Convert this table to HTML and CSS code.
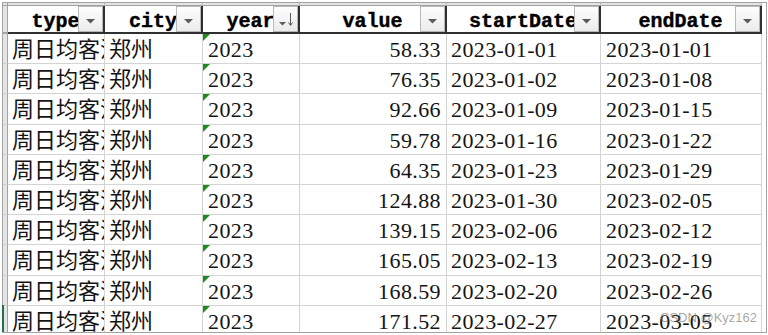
FILE: index.html
```html
<!DOCTYPE html>
<html lang="zh">
<head>
<meta charset="utf-8">
<title>sheet</title>
<link rel="stylesheet" href="styles.css">
</head>
<body>
<div class="sheet">
  <div class="grid">
    <div class="strip corner"></div><div class="strip"></div><div class="strip"></div><div class="strip"></div><div class="strip"></div><div class="strip"></div><div class="strip"></div>

    <div class="rh rh-head"></div>
    <div class="hd">type<span class="btn"><svg width="23" height="24" viewBox="0 0 23 24"><polygon points="7,12 16,12 11.5,16.5" fill="#5a5a5a"/></svg></span></div>
    <div class="hd">city<span class="btn"><svg width="23" height="24" viewBox="0 0 23 24"><polygon points="7,12 16,12 11.5,16.5" fill="#5a5a5a"/></svg></span></div>
    <div class="hd">year<span class="btn"><svg width="23" height="24" viewBox="0 0 23 24"><polygon points="5,15 12,15 8.5,18.5" fill="#5a5a5a"/><line x1="16.5" y1="6" x2="16.5" y2="18" stroke="#5a5a5a" stroke-width="1"/><polyline points="14.5,15.5 16.5,18.5 18.5,15.5" fill="none" stroke="#5a5a5a" stroke-width="1"/></svg></span></div>
    <div class="hd">value<span class="btn"><svg width="23" height="24" viewBox="0 0 23 24"><polygon points="7,12 16,12 11.5,16.5" fill="#5a5a5a"/></svg></span></div>
    <div class="hd">startDate<span class="btn"><svg width="23" height="24" viewBox="0 0 23 24"><polygon points="7,12 16,12 11.5,16.5" fill="#5a5a5a"/></svg></span></div>
    <div class="hd">endDate<span class="btn"><svg width="23" height="24" viewBox="0 0 23 24"><polygon points="7,12 16,12 11.5,16.5" fill="#5a5a5a"/></svg></span></div>

    <div class="rh"></div><div class="c cn">周日均客流</div><div class="c cn">郑州</div><div class="c num yr">2023</div><div class="c num val">58.33</div><div class="c num">2023-01-01</div><div class="c num end">2023-01-01</div>
    <div class="rh"></div><div class="c cn">周日均客流</div><div class="c cn">郑州</div><div class="c num yr">2023</div><div class="c num val">76.35</div><div class="c num">2023-01-02</div><div class="c num end">2023-01-08</div>
    <div class="rh"></div><div class="c cn">周日均客流</div><div class="c cn">郑州</div><div class="c num yr">2023</div><div class="c num val">92.66</div><div class="c num">2023-01-09</div><div class="c num end">2023-01-15</div>
    <div class="rh"></div><div class="c cn">周日均客流</div><div class="c cn">郑州</div><div class="c num yr">2023</div><div class="c num val">59.78</div><div class="c num">2023-01-16</div><div class="c num end">2023-01-22</div>
    <div class="rh"></div><div class="c cn">周日均客流</div><div class="c cn">郑州</div><div class="c num yr">2023</div><div class="c num val">64.35</div><div class="c num">2023-01-23</div><div class="c num end">2023-01-29</div>
    <div class="rh"></div><div class="c cn">周日均客流</div><div class="c cn">郑州</div><div class="c num yr">2023</div><div class="c num val">124.88</div><div class="c num">2023-01-30</div><div class="c num end">2023-02-05</div>
    <div class="rh"></div><div class="c cn">周日均客流</div><div class="c cn">郑州</div><div class="c num yr">2023</div><div class="c num val">139.15</div><div class="c num">2023-02-06</div><div class="c num end">2023-02-12</div>
    <div class="rh"></div><div class="c cn">周日均客流</div><div class="c cn">郑州</div><div class="c num yr">2023</div><div class="c num val">165.05</div><div class="c num">2023-02-13</div><div class="c num end">2023-02-19</div>
    <div class="rh"></div><div class="c cn">周日均客流</div><div class="c cn">郑州</div><div class="c num yr">2023</div><div class="c num val">168.59</div><div class="c num">2023-02-20</div><div class="c num end">2023-02-26</div>
    <div class="rh"></div><div class="c cn">周日均客流</div><div class="c cn">郑州</div><div class="c num yr">2023</div><div class="c num val">171.52</div><div class="c num">2023-02-27</div><div class="c num end">2023-03-05</div>
  </div>
</div>
<div class="sel"></div>
<div class="wm">CSDN @Kyz162</div>
</body>
</html>
```

FILE: styles.css
```css
* { box-sizing: border-box; }
html, body {
  margin: 0;
  width: 768px;
  height: 335px;
  overflow: hidden;
  background: #ffffff;
}
body { position: relative; }

.sheet {
  position: relative;
  margin: 2px 0 0 2px;
  width: 765px;
  height: 331px;
  border: 1px solid #a3a3a3;
  overflow: hidden;
  background: #ffffff;
}

.grid {
  display: grid;
  grid-template-columns: 5px 97px 98px 97px 147px 154px 161px;
  grid-template-rows: 3px 28px repeat(10, 30.2px);
}

.strip {
  background: #e4e4e4;
  border-bottom: 1px solid #a3a3a3;
  border-right: 1px solid #bdbdbd;
}
.strip.corner { border-right-color: #a3a3a3; }

.rh {
  background: #e4e4e4;
  border-right: 1px solid #a3a3a3;
  border-bottom: 1px solid #d2d2d2;
}
.rh-head { border-bottom: 2px solid #a3a3a3; }

.hd {
  position: relative;
  overflow: hidden;
  white-space: nowrap;
  border-right: 2px solid #303030;
  border-bottom: 2px solid #303030;
  padding-top: 5px;
  font: bold 20px/21px "Liberation Mono", "DejaVu Sans Mono", monospace;
  -webkit-text-stroke: 0.4px #000;
  color: #000;
  text-align: center;
}

.btn {
  position: absolute;
  top: 0;
  right: 0;
  width: 25px;
  height: 26px;
  border: 1px solid #b8b8b8;
  background: linear-gradient(#fefefe, #ebebeb);
}
.btn svg { display: block; }

.c {
  position: relative;
  overflow: hidden;
  white-space: nowrap;
  border-right: 1px solid #d4d4d4;
  border-bottom: 1px solid #d4d4d4;
  padding: 1px 4px 0 4px;
  line-height: 30px;
  color: #141414;
}
.cn {
  font-family: "Noto Sans CJK SC", "Noto Sans CJK JP", sans-serif;
  font-size: 22px;
  padding-top: 0;
  line-height: 27px;
}
.num {
  font-family: "Liberation Serif", serif;
  font-size: 22px;
  letter-spacing: 0.4px;
}
.yr { padding-left: 5px; }
.yr::before {
  content: "";
  position: absolute;
  top: 0;
  left: 0;
  border-top: 7px solid #1d8a1d;
  border-right: 7px solid transparent;
}
.val {
  text-align: right;
  padding-right: 5px;
}
.end { padding-left: 5px; }

.sel {
  position: absolute;
  left: 2px;
  top: 305px;
  width: 2px;
  height: 27px;
  background: #217346;
}

.wm {
  position: absolute;
  left: 660px;
  top: 310px;
  font: 13px/15px "Liberation Sans", Arial, sans-serif;
  color: rgba(105, 105, 105, 0.6);
}
```
